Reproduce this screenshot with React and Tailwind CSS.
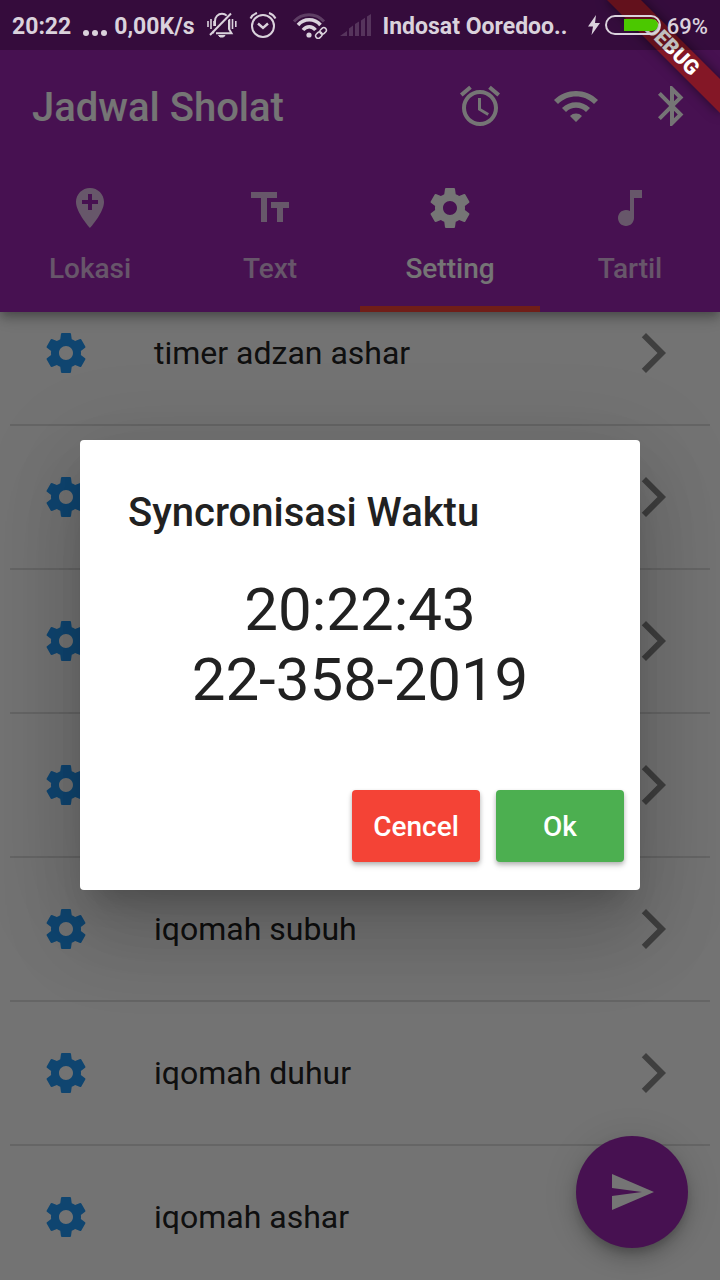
import React from "react";

const PATHS = {
  alarm:
    "M22 5.72l-4.6-3.86-1.29 1.53 4.6 3.86L22 5.72zM7.88 3.39L6.6 1.86 2 5.71l1.29 1.53 4.59-3.85zM12.5 8H11v6l4.75 2.85.75-1.23-4-2.37V8zM12 4c-4.97 0-9 4.03-9 9s4.02 9 9 9c4.97 0 9-4.03 9-9s-4.03-9-9-9zm0 16c-3.87 0-7-3.13-7-7s3.13-7 7-7 7 3.13 7 7-3.13 7-7 7z",
  wifi: "M1 9l2 2c4.97-4.97 13.03-4.97 18 0l2-2C16.93 2.93 7.08 2.93 1 9zm8 8l3 3 3-3c-1.65-1.66-4.34-1.66-6 0zm-4-4l2 2c2.76-2.76 7.24-2.76 10 0l2-2C15.14 9.14 8.87 9.14 5 13z",
  bluetooth:
    "M17.71 7.71L12 2h-1v7.59L6.41 5 5 6.41 10.59 12 5 17.59 6.41 19 11 14.41V22h1l5.71-5.71-4.3-4.29 4.3-4.29zM13 5.83l1.88 1.88L13 9.59V5.83zm1.88 10.46L13 18.17v-3.76l1.88 1.88z",
  addLocation:
    "M12 2C8.14 2 5 5.14 5 9c0 5.25 7 13 7 13s7-7.75 7-13c0-3.86-3.14-7-7-7zm4 8h-3v3h-2v-3H8V8h3V5h2v3h3v2z",
  textFields: "M2.5 4v3h5v12h3V7h5V4h-13zm19 5h-9v3h3v7h3v-7h3V9z",
  settings:
    "M19.43 12.98c.04-.32.07-.64.07-.98s-.03-.66-.07-.98l2.11-1.65c.19-.15.24-.42.12-.64l-2-3.46c-.12-.22-.39-.3-.61-.22l-2.49 1c-.52-.4-1.08-.73-1.69-.98l-.38-2.65C14.46 2.18 14.25 2 14 2h-4c-.25 0-.46.18-.49.42l-.38 2.65c-.61.25-1.17.59-1.69.98l-2.49-1c-.23-.09-.49 0-.61.22l-2 3.46c-.13.22-.07.49.12.64l2.11 1.65c-.04.32-.07.65-.07.98s.03.66.07.98l-2.11 1.65c-.19.15-.24.42-.12.64l2 3.46c.12.22.39.3.61.22l2.49-1c.52.4 1.08.73 1.69.98l.38 2.65c.03.24.24.42.49.42h4c.25 0 .46-.18.49-.42l.38-2.65c.61-.25 1.17-.59 1.69-.98l2.49 1c.23.09.49 0 .61-.22l2-3.46c.12-.22.07-.49-.12-.64l-2.11-1.65zM12 15.5c-1.93 0-3.5-1.57-3.5-3.5s1.57-3.5 3.5-3.5 3.5 1.57 3.5 3.5-1.57 3.5-3.5 3.5z",
  musicNote: "M12 3v10.55c-.59-.34-1.27-.55-2-.55-2.21 0-4 1.79-4 4s1.79 4 4 4 4-1.79 4-4V7h4V3h-6z",
  forward: "M5.88 4.12L13.76 12l-7.88 7.88L8 22l10-10L8 2z",
  send: "M2.01 21L23 12 2.01 3 2 10l15 2-15 2z",
};

function Icon({ name, className = "" }) {
  return (
    <svg viewBox="0 0 24 24" className={`size-12 shrink-0 fill-current ${className}`} aria-hidden="true">
      <path d={PATHS[name]} />
    </svg>
  );
}

function StatusBar() {
  return (
    <div className="absolute inset-x-0 top-0 flex h-[50px] items-center bg-black/25 px-3 text-[23px] leading-7 font-bold text-[#dad2dc]">
      <span className="pt-1">20:22</span>
      <svg viewBox="0 0 24 24" className="ml-3 size-6 shrink-0 fill-current" aria-hidden="true">
        <circle cx="3" cy="20" r="3" />
        <circle cx="12" cy="20" r="3" />
        <circle cx="21" cy="20" r="3" />
      </svg>
      <span className="ml-[7px] pt-1">0,00K/s</span>

      <svg viewBox="0 0 30 26" className="ml-3 h-[26px] w-[30px] shrink-0 fill-none stroke-current stroke-2" aria-hidden="true">
        <path d="M1 9v6M4 7v10M7 9v5M22.500 7v10M25.500 7v10M28.800 9v6" strokeWidth="1.600" />
        <path d="M8 14V9c0-4 3-7.200 7-7.200 2 0 3.500 .6 4.700 1.800M22 8v9l2.500 4.200H9M5.500 21.200l1.200-1.800" />
        <path d="M24 1.500L3 23" />
        <path d="M11.500 23.500h6.500l-1.500 1.500h-3.500z" strokeWidth="1" className="fill-current" />
      </svg>

      <svg viewBox="0 0 28 28" className="ml-3 size-7 shrink-0 fill-none stroke-current stroke-2" aria-hidden="true">
        <circle cx="14" cy="15" r="11" />
        <path d="M9 12.500l5 4.500 5-4.500" strokeWidth="2.400" />
        <path d="M1.500 7.500C3 4.500 5 3 8 2M26.500 7.500C25 4.500 23 3 20 2" />
      </svg>

      <svg viewBox="0 0 36 28" className="ml-[15px] h-7 w-9 shrink-0 fill-none stroke-current" aria-hidden="true">
        <path d="M2 10.500C10 1.500 24 1.500 32 10.500" strokeWidth="3" opacity=".25" />
        <path d="M6 14C12 7 22.500 7 28.500 14" strokeWidth="3.500" />
        <path d="M11 19C14.500 14.500 20 14.500 23.500 19" strokeWidth="3.500" />
        <circle cx="17" cy="24" r="2.600" className="fill-current" stroke="none" />
        <g strokeWidth="1.500" transform="rotate(-45 29 22)">
          <rect x="22.500" y="19.500" width="7" height="5" rx="2.500" />
          <rect x="28.500" y="19.500" width="7" height="5" rx="2.500" />
        </g>
      </svg>

      <svg viewBox="0 0 32 22" className="ml-3 h-[22px] w-8 shrink-0 fill-current opacity-20" aria-hidden="true">
        <path d="M0 22l7-5v5zM9 14.500l4-3V22H9zM15 10l4-2.500V22h-4zM21 6.500l4-2.800V22h-4zM27 2.500L31 0v22h-4z" />
      </svg>

      <span className="ml-[11px] min-w-0 flex-1 pt-1 whitespace-nowrap">Indosat Ooredoo..</span>

      <svg viewBox="0 0 12 20" className="h-5 w-3 shrink-0 fill-current" aria-hidden="true">
        <path d="M8 0L0 11.500h5L3.500 20 12 8H7z" />
      </svg>
      <svg viewBox="0 0 56 20" className="ml-[5px] h-5 w-14 shrink-0" aria-hidden="true">
        <rect x="1" y="1" width="54" height="18" rx="9" fill="none" stroke="currentColor" strokeWidth="2" />
        <path d="M19 4h28a6 6 0 0 1 0 12H19z" fill="#4bc800" />
      </svg>
      <span className="ml-[6px] pt-1 text-[22px] font-medium">69%</span>
    </div>
  );
}

function DebugBanner() {
  return (
    <div className="pointer-events-none absolute top-0 right-0 size-32 overflow-hidden">
      <div className="absolute top-9 -right-8 flex h-6 w-40 rotate-45 items-center justify-center bg-[#841726] text-[21px] leading-6 font-black text-white shadow-[0_0_12px_rgba(0,0,0,0.5)]">
        DEBUG
      </div>
    </div>
  );
}

const ACTIONS = [
  { icon: "alarm", label: "Alarm" },
  { icon: "wifi", label: "Wifi" },
  { icon: "bluetooth", label: "Bluetooth" },
];

const TABS = [
  { icon: "addLocation", label: "Lokasi" },
  { icon: "textFields", label: "Text" },
  { icon: "settings", label: "Setting", active: true },
  { icon: "musicNote", label: "Tartil" },
];

const ROWS = [
  { id: 1, label: "timer adzan ashar" },
  { id: 2, label: "" },
  { id: 3, label: "" },
  { id: 4, label: "" },
  { id: 5, label: "iqomah subuh" },
  { id: 6, label: "iqomah duhur" },
  { id: 7, label: "iqomah ashar" },
];

function Header() {
  return (
    <header className="relative z-10 shrink-0 bg-[#9c27b0] pt-[50px] text-white shadow-[0_4px_8px_-2px_rgba(0,0,0,0.2),0_8px_10px_rgba(0,0,0,0.14),0_2px_20px_rgba(0,0,0,0.12)]">
      <div className="flex h-28 items-center pl-8">
        <h1 className="flex-1 pt-1 text-[40px] leading-[48px] font-medium">Jadwal Sholat</h1>
        {ACTIONS.map((a) => (
          <button key={a.label} type="button" aria-label={a.label} className="flex h-24 w-24 items-center justify-center">
            <Icon name={a.icon} />
          </button>
        ))}
      </div>
      <nav className="grid grid-cols-4">
        {TABS.map((t) => (
          <button
            key={t.label}
            type="button"
            className={`flex h-[150px] flex-col items-center gap-[21px] border-b-[6px] pt-[22px] text-[28px] leading-8 font-medium ${
              t.active ? "border-[#f44336]" : "border-transparent text-white/70"
            }`}
          >
            <Icon name={t.icon} />
            {t.label}
          </button>
        ))}
      </nav>
    </header>
  );
}

function SyncDialog() {
  const button =
    "h-[72px] w-32 rounded pt-[2px] text-[28px] font-medium text-white shadow-[0_2px_4px_rgba(0,0,0,0.2),0_4px_6px_rgba(0,0,0,0.14)]";
  return (
    <div className="absolute inset-0 flex items-center justify-center bg-black/54 px-20 pt-[50px]">
      <div
        role="dialog"
        aria-modal="true"
        aria-labelledby="dialog-title"
        className="w-full rounded bg-white text-[#212121] shadow-[0_22px_30px_-14px_rgba(0,0,0,0.2),0_48px_80px_6px_rgba(0,0,0,0.12),0_18px_96px_12px_rgba(0,0,0,0.1)]"
      >
        <h2 id="dialog-title" className="px-12 pt-12 text-[40px] leading-[50px] font-medium">
          Syncronisasi Waktu
        </h2>
        <p className="px-12 pt-[37px] text-center text-[60px] leading-[70px]">
          20:22:43
          <br />
          22-358-2019
        </p>
        <div className="flex justify-end gap-4 px-4 pt-[75px] pb-7">
          <button type="button" className={`${button} bg-[#f44336]`}>
            Cencel
          </button>
          <button type="button" className={`${button} bg-[#4caf50]`}>
            Ok
          </button>
        </div>
      </div>
    </div>
  );
}

export default function App() {
  return (
    <div className="relative h-screen overflow-hidden bg-[#fafafa] font-['Roboto',sans-serif]">
      <div className="isolate flex h-full flex-col">
        <Header />
        <main className="min-h-0 flex-1 overflow-hidden">
          <ul className="-mt-[30px] px-[10px]">
            {ROWS.map((row) => (
              <li key={row.id} className="border-b-2 border-[#dcdcdc]">
                <button type="button" className="flex h-[142px] w-full items-center px-8 text-left">
                  <Icon name="settings" className="text-[#2196f3]" />
                  <span className="ml-16 flex-1 text-[32px] leading-10 text-[#212121]">{row.label}</span>
                  <Icon name="forward" className="text-[#8a8a8a]" />
                </button>
              </li>
            ))}
          </ul>
        </main>
        <button
          type="button"
          aria-label="Kirim"
          className="absolute right-8 bottom-8 flex size-28 items-center justify-center rounded-full bg-[#9c27b0] text-white shadow-[0_6px_10px_-2px_rgba(0,0,0,0.2),0_12px_20px_rgba(0,0,0,0.14),0_2px_36px_rgba(0,0,0,0.12)]"
        >
          <Icon name="send" />
        </button>
      </div>
      <SyncDialog />
      <DebugBanner />
      <StatusBar />
    </div>
  );
}
